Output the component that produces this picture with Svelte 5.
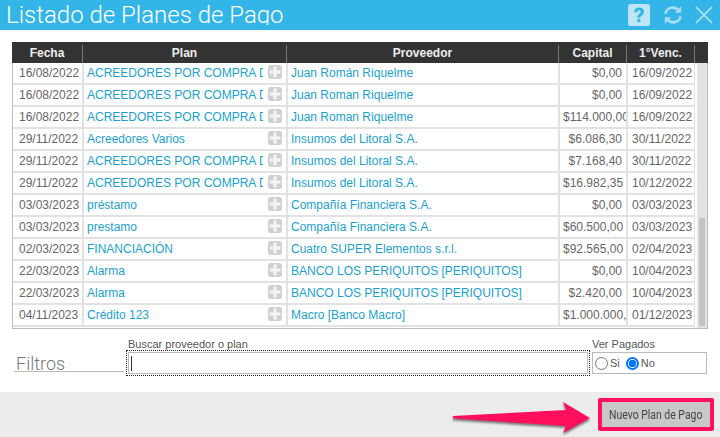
<script>
  const rows = [
    ["16/08/2022", "ACREEDORES POR COMPRA DE BIENES", "Juan Román Riquelme", "$0,00", "16/09/2022"],
    ["16/08/2022", "ACREEDORES POR COMPRA DE BIENES", "Juan Roman Riquelme", "$0,00", "16/09/2022"],
    ["16/08/2022", "ACREEDORES POR COMPRA DE BIENES", "Juan Roman Riquelme", "$114.000,00", "16/09/2022"],
    ["29/11/2022", "Acreedores Varios", "Insumos del Litoral S.A.", "$6.086,30", "30/11/2022"],
    ["29/11/2022", "ACREEDORES POR COMPRA DE BIENES", "Insumos del Litoral S.A.", "$7.168,40", "30/11/2022"],
    ["29/11/2022", "ACREEDORES POR COMPRA DE BIENES", "Insumos del Litoral S.A.", "$16.982,35", "10/12/2022"],
    ["03/03/2023", "préstamo", "Compañía Financiera S.A.", "$0,00", "03/03/2023"],
    ["03/03/2023", "prestamo", "Compañía Financiera S.A.", "$60.500,00", "03/03/2023"],
    ["02/03/2023", "FINANCIACIÓN", "Cuatro SUPER Elementos s.r.l.", "$92.565,00", "02/04/2023"],
    ["22/03/2023", "Alarma", "BANCO LOS PERIQUITOS [PERIQUITOS]", "$0,00", "10/04/2023"],
    ["22/03/2023", "Alarma", "BANCO LOS PERIQUITOS [PERIQUITOS]", "$2.420,00", "10/04/2023"],
    ["04/11/2023", "Crédito 123", "Macro [Banco Macro]", "$1.000.000,00", "01/12/2023"]
  ];
</script>

<div class="page">
  <header class="titlebar">
    <h1>Listado de Planes de Pago</h1>
    <div class="tools">
      <svg width="22" height="22" viewBox="0 0 23 23">
        <rect width="23" height="23" rx="3" fill="#bde6f8" />
        <path d="M6.500 8.500c0-3 2.200-4.800 5-4.800 3 0 5.200 1.700 5.200 4.300 0 3.600-3.800 3.700-3.800 6.400H9.700c0-4 3.600-4.200 3.600-6.200 0-1-.7-1.600-1.800-1.600-1.200 0-1.900.8-1.900 2.100z" fill="#33b5e8" />
        <rect x="9.700" y="15.700" width="3.200" height="3.200" fill="#33b5e8" />
      </svg>
      <svg class="refresh" width="20" height="20" viewBox="0 0 22 22" fill="none" stroke="#a9dff5" stroke-width="3">
        <path d="M2.500 9.500C3.500 5.500 7 3 10.500 3c3 0 5 1.300 6.500 3" />
        <path d="M19.500 12.500c-1 4-4.500 6.500-8 6.500-3 0-5-1.300-6.500-3" />
        <path d="M20 1.500v7h-7z" fill="#a9dff5" stroke="none" />
        <path d="M2 20.500v-7h7z" fill="#a9dff5" stroke="none" />
      </svg>
      <svg width="18" height="18" viewBox="0 0 18 18" stroke="#bde6f8" stroke-width="1.500">
        <path d="M1 1l16 16M17 1L1 17" />
      </svg>
    </div>
  </header>

  <main class="content">
    <section class="grid">
      <div class="head">
        <span class="c-date">Fecha</span>
        <span class="c-plan">Plan</span>
        <span class="c-prov">Proveedor</span>
        <span class="c-cap">Capital</span>
        <span class="c-venc">1°Venc.</span>
        <span class="c-end"></span>
      </div>
      <div class="body">
        <div class="rows">
          {#each rows as row}
            <div class="row">
              <span class="c-date num">{row[0]}</span>
              <span class="c-plan link">
                <span class="clip">{row[1]}</span>
                <svg class="plus" width="14" height="14" viewBox="0 0 14 14">
                  <rect width="14" height="14" rx="2.500" fill="#d0d0d0" />
                  <path d="M5.500 1.500h3v4h4v3h-4v4h-3v-4h-4v-3h4z" fill="#f4f4f4" />
                </svg>
              </span>
              <span class="c-prov link"><span class="clip">{row[2]}</span></span>
              <span class="c-cap num money">{row[3]}</span>
              <span class="c-venc num">{row[4]}</span>
            </div>
          {/each}
        </div>
        <div class="scrollbar"><i></i></div>
      </div>
    </section>

    <section class="filters">
      <div class="filters-title">Filtros</div>
      <label class="search">
        <span>Buscar proveedor o plan</span>
        <div class="search-input"><b></b></div>
      </label>
      <div class="paid">
        <span>Ver Pagados</span>
        <div class="paid-box">
          <i class="radio"></i><em>Si</em>
          <i class="radio on"></i><em>No</em>
        </div>
      </div>
    </section>
  </main>

  <footer class="footer">
    <button><span>Nuevo Plan de Pago</span></button>
    <svg class="arrow" width="150" height="45" viewBox="0 0 150 45">
      <path d="M1 24L114 18 111 10 138 26 111 41 114 34 1 26.500z" fill="#ff0f5c" />
    </svg>
  </footer>
</div>

<style>
  :global(body) {
    margin: 0;
    background: #fff;
  }

  .page {
    display: flex;
    flex-direction: column;
    width: 720px;
    height: 437px;
    overflow: hidden;
    font-family: "Liberation Sans", Arial, sans-serif;
    font-size: 12px;
    color: #555;
  }

  .titlebar {
    display: flex;
    justify-content: space-between;
    flex: 0 0 30px;
    height: 30px;
    overflow: hidden;
    background: #33b5e8;
  }

  h1 {
    height: 25px;
    margin: 0;
    padding: 0 0 0 6px;
    overflow: hidden;
    font-family: Roboto, sans-serif;
    font-size: 24px;
    font-weight: 300;
    line-height: 30px;
    color: #fff;
  }

  .tools {
    display: flex;
    align-items: center;
    gap: 12.5px;
    padding: 0 7px 0 0;
  }

  .content {
    flex: 1;
    padding: 12px 12px 0;
  }

  .grid {
    width: 696px;
    border: 1px solid #bdbdbd;
    border-top: 0;
    box-sizing: border-box;
  }

  .head {
    display: flex;
    height: 21px;
    margin: 0 -1px;
    padding-top: 3px;
    box-sizing: border-box;
    background: #333;
    color: #eee;
    font-weight: bold;
    line-height: 16px;
    text-align: center;
  }

  .head span {
    box-sizing: border-box;
    height: 18px;
    border-right: 1px solid #777;
  }

  .head .c-date { flex: 0 0 71px; }
  .head .c-plan { flex: 0 0 204px; }
  .head .c-prov { flex: 0 0 272px; }
  .head .c-cap { flex: 0 0 68px; }
  .head .c-venc { flex: 0 0 68px; }
  .c-end { flex: 1; border: 0 !important; }

  .body {
    display: flex;
    justify-content: space-between;
  }

  .rows {
    width: 682px;
    padding-bottom: 1px;
  }

  .row {
    display: flex;
    height: 22px;
    box-sizing: border-box;
    border-bottom: 2px solid #e2e2e2;
    line-height: 20px;
  }

  .row > span {
    box-sizing: border-box;
    height: 20px;
    border-right: 2px solid #e2e2e2;
    overflow: hidden;
    white-space: nowrap;
  }

  .row .c-date {
    flex: 0 0 71px;
    padding-left: 6px;
  }

  .row .c-plan { flex: 0 0 204px; }
  .row .c-prov { flex: 0 0 272px; }
  .row .c-cap { flex: 0 0 68px; }
  .row .c-venc { flex: 0 0 67px; }

  .num {
    color: #666;
  }

  .link {
    display: flex;
    align-items: center;
    justify-content: space-between;
    padding-left: 3px;
    padding-right: 4px;
    color: #1b9fd0;
  }

  .clip {
    flex: 1;
    overflow: hidden;
  }

  .plus {
    flex: none;
    margin-left: 5px;
    margin-top: -2px;
  }

  .money {
    text-align: right;
    padding: 0 4px 0 3px;
  }

  .row .c-venc {
    padding-left: 4px;
    border-right: 1px solid #e2e2e2;
  }

  .scrollbar {
    flex: 0 0 10px;
    display: flex;
    align-items: flex-end;
    background: #e3e3e3;
  }

  .scrollbar i {
    display: block;
    width: 6px;
    height: 108px;
    margin: 0 2px 2px;
    background: #c3c3c3;
  }

  .filters {
    display: flex;
    align-items: flex-start;
    margin-top: 9px;
    height: 53px;
  }

  .filters-title {
    width: 110px;
    height: 34px;
    margin: 0 0 0 2px;
    padding: 16px 0 0 2px;
    box-sizing: border-box;
    border-bottom: 1px solid #bbb;
    font-family: Roboto, sans-serif;
    font-size: 18px;
    font-weight: 300;
    line-height: 20px;
    color: #777;
    overflow: hidden;
  }

  .search {
    display: block;
    width: 460px;
    margin-left: 4px;
  }

  .search > span,
  .paid > span {
    display: block;
    height: 14px;
    font-size: 11px;
    line-height: 13px;
    color: #555;
  }

  .search-input {
    display: flex;
    align-items: center;
    box-sizing: border-box;
    height: 22px;
    padding-left: 2px;
    border: 1px solid #bbb;
    outline: 1px dotted #223;
    outline-offset: 1px;
  }

  .search-input b {
    display: block;
    width: 1px;
    height: 15px;
    background: #333;
  }

  .paid {
    width: 115px;
    margin-left: 4px;
  }

  .paid-box {
    display: flex;
    align-items: center;
    box-sizing: border-box;
    height: 22px;
    padding-left: 2px;
    border: 1px solid #bbb;
  }

  .radio {
    box-sizing: border-box;
    width: 13px;
    height: 13px;
    border: 1px solid #767676;
    border-radius: 50%;
  }

  .radio.on {
    margin-left: 6px;
    border: 2px solid #0075ff;
    background: radial-gradient(circle, #0075ff 0 3.500px, #fff 4px);
  }

  em {
    margin-left: 2px;
    font-style: normal;
    font-size: 11px;
    color: #555;
  }

  .footer {
    position: relative;
    display: flex;
    justify-content: flex-end;
    flex: 0 0 45px;
    padding: 6px 6px 0 0;
    box-sizing: border-box;
    background: #ececec;
  }

  button {
    width: 116px;
    height: 33px;
    padding: 0;
    border: 4px solid #ff0f5c;
    border-radius: 2px;
    background: #c8c8c8;
    font-family: Roboto, sans-serif;
    font-size: 12px;
    color: #444;
    white-space: nowrap;
  }

  button span {
    display: inline-block;
    transform: scaleX(0.87);
  }

  .arrow {
    position: absolute;
    left: 452px;
    top: 0;
    filter: drop-shadow(0 2px 1px rgba(0, 0, 0, 0.5));
  }
</style>
